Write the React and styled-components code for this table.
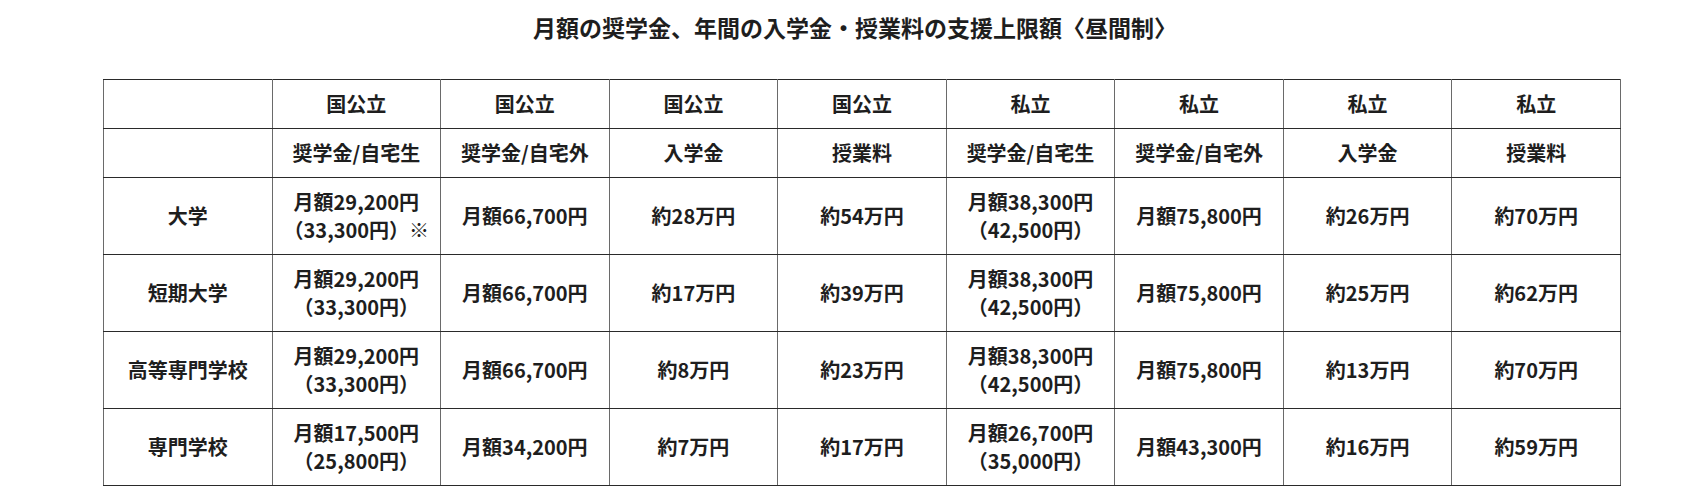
import React from "react";
import styled, { createGlobalStyle } from "styled-components";

const GlobalStyle = createGlobalStyle`
  body {
    margin: 0;
    background: #ffffff;
    font-family: "Noto Sans CJK JP", "Noto Sans", sans-serif;
    color: #1e1e1e;
  }
`;

const header1 = ["国公立", "国公立", "国公立", "国公立", "私立", "私立", "私立", "私立"];
const header2 = [
  "奨学金/自宅生",
  "奨学金/自宅外",
  "入学金",
  "授業料",
  "奨学金/自宅生",
  "奨学金/自宅外",
  "入学金",
  "授業料",
];

const rows = [
  {
    name: "大学",
    cells: [
      ["月額29,200円", "（33,300円）※"],
      ["月額66,700円"],
      ["約28万円"],
      ["約54万円"],
      ["月額38,300円", "（42,500円）"],
      ["月額75,800円"],
      ["約26万円"],
      ["約70万円"],
    ],
  },
  {
    name: "短期大学",
    cells: [
      ["月額29,200円", "（33,300円）"],
      ["月額66,700円"],
      ["約17万円"],
      ["約39万円"],
      ["月額38,300円", "（42,500円）"],
      ["月額75,800円"],
      ["約25万円"],
      ["約62万円"],
    ],
  },
  {
    name: "高等専門学校",
    cells: [
      ["月額29,200円", "（33,300円）"],
      ["月額66,700円"],
      ["約8万円"],
      ["約23万円"],
      ["月額38,300円", "（42,500円）"],
      ["月額75,800円"],
      ["約13万円"],
      ["約70万円"],
    ],
  },
  {
    name: "専門学校",
    cells: [
      ["月額17,500円", "（25,800円）"],
      ["月額34,200円"],
      ["約7万円"],
      ["約17万円"],
      ["月額26,700円", "（35,000円）"],
      ["月額43,300円"],
      ["約16万円"],
      ["約59万円"],
    ],
  },
];

const App = () => {
  return (
    <>
      <GlobalStyle />
      <Wrap>
        <Title>月額の奨学金、年間の入学金・授業料の支援上限額〈昼間制〉</Title>
        <Table>
          <tbody>
            <HeadRow>
              <Cell />
              {header1.map((h, i) => (
                <Cell key={i}>{h}</Cell>
              ))}
            </HeadRow>
            <HeadRow>
              <Cell />
              {header2.map((h, i) => (
                <Cell key={i}>{h}</Cell>
              ))}
            </HeadRow>
            {rows.map((row) => (
              <DataRow key={row.name}>
                <Cell>{row.name}</Cell>
                {row.cells.map((lines, i) => (
                  <Cell key={i}>
                    {lines.map((l, j) => (
                      <Line key={j}>{l}</Line>
                    ))}
                  </Cell>
                ))}
              </DataRow>
            ))}
          </tbody>
        </Table>
      </Wrap>
    </>
  );
};

const Wrap = styled.div`
  width: 1518px;
  margin-left: 103px;
  padding-top: 13px;
`;

const Title = styled.h2`
  margin: 0 14px 0 0;
  height: 66px;
  font-size: 23px;
  font-weight: 700;
  line-height: 28px;
  text-align: center;
  color: #1e1e1e;
`;

const Table = styled.table`
  width: 1518px;
  border-collapse: collapse;
  table-layout: fixed;
  border: 1px solid #2a2a2a;
  font-size: 20px;
  font-weight: 700;
  color: #1e1e1e;
`;

const HeadRow = styled.tr`
  height: 49px;
`;

const DataRow = styled.tr`
  height: 77px;
`;

const Cell = styled.td`
  padding: 0;
  text-align: center;
  vertical-align: middle;
  border-top: 1px solid #2a2a2a;
  border-bottom: 1px solid #2a2a2a;
  border-left: 1px solid #6a6a6a;
  border-right: 1px solid #6a6a6a;
  line-height: 28px;
  white-space: nowrap;
`;

const Line = styled.div`
  display: block;
`;

export default App;
